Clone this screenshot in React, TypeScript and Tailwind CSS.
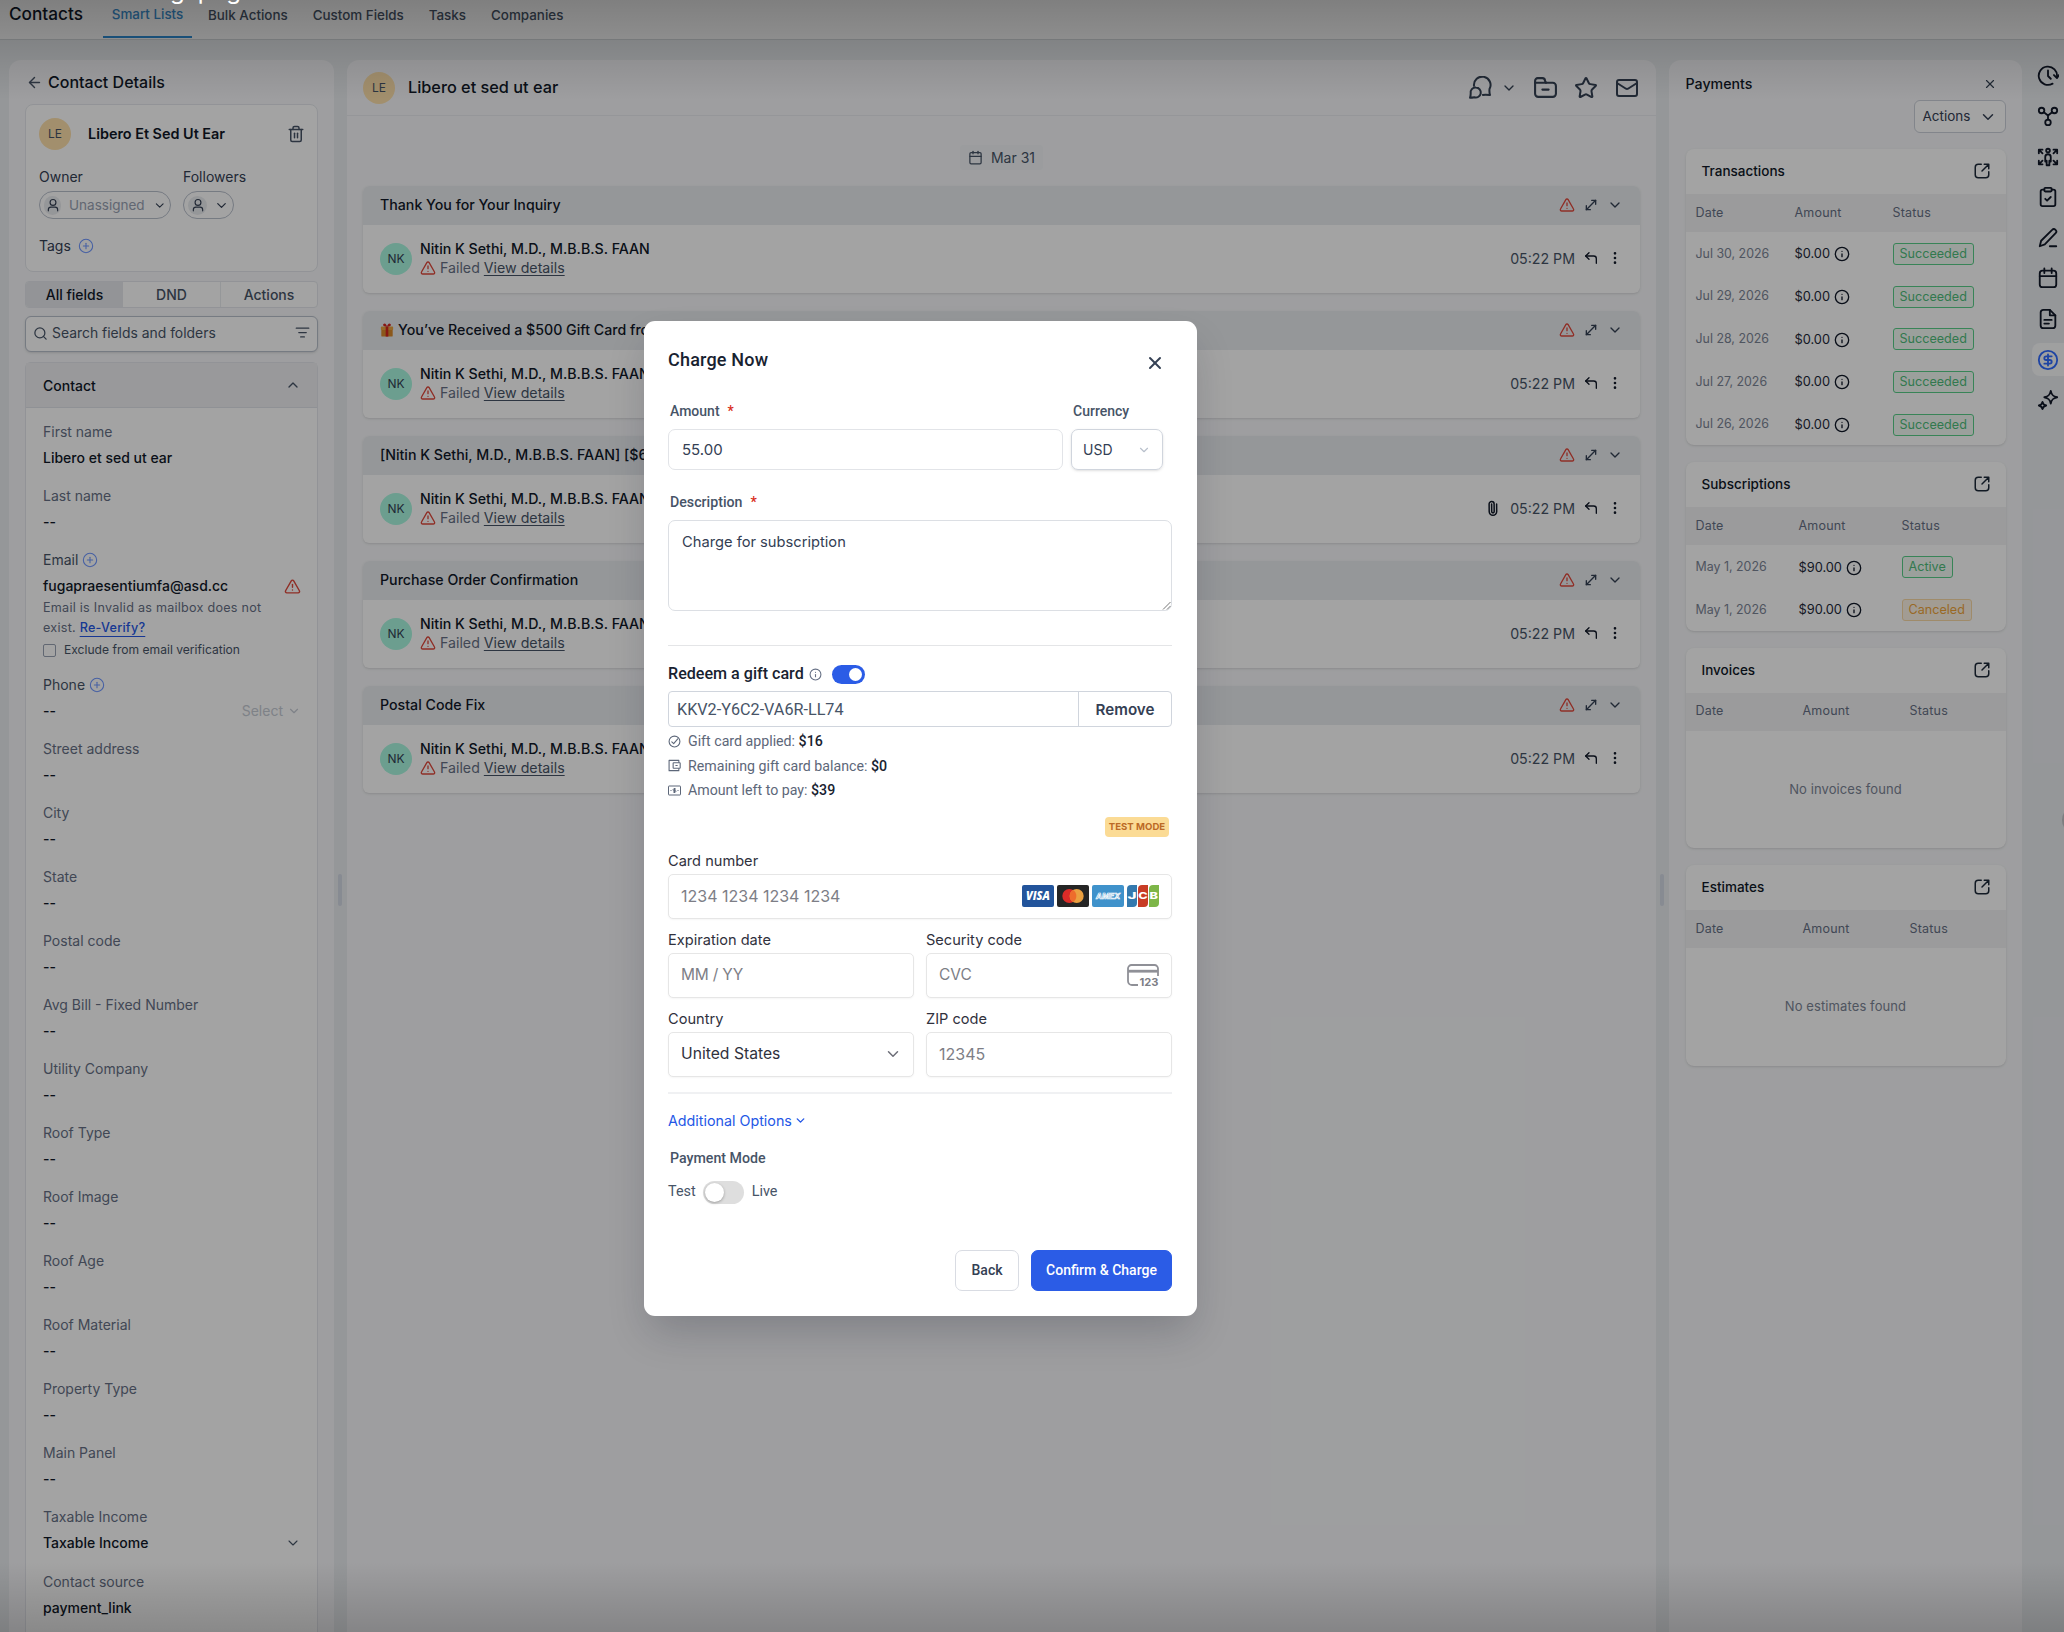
import type { ReactNode } from 'react'
import {
  ArrowLeft,
  Calendar,
  ChevronDown,
  ChevronUp,
  CircleDollarSign,
  CirclePlus,
  ClipboardCheck,
  CornerUpLeft,
  EllipsisVertical,
  FileText,
  Info,
  ListFilter,
  Mail,
  MoveDiagonal,
  Paperclip,
  Search,
  Star,
  Trash2,
  TriangleAlert,
  X,
} from 'lucide-react'

const fields = [
  'Street address',
  'City',
  'State',
  'Postal code',
  'Avg Bill - Fixed Number',
  'Utility Company',
  'Roof Type',
  'Roof Image',
  'Roof Age',
  'Roof Material',
  'Property Type',
  'Main Panel',
]

const messages = [
  { title: 'Thank You for Your Inquiry' },
  { title: 'You’ve Received a $500 Gift Card from', gift: true },
  { title: '[Nitin K Sethi, M.D., M.B.B.S. FAAN] [$6', attachment: true },
  { title: 'Purchase Order Confirmation' },
  { title: 'Postal Code Fix' },
]

const transactions = ['Jul 30, 2026', 'Jul 29, 2026', 'Jul 28, 2026', 'Jul 27, 2026', 'Jul 26, 2026']

/* ---------- Icons ---------- */

function Svg({ children, className }: { children: ReactNode; className?: string }) {
  return (
    <svg
      viewBox="0 0 24 24"
      fill="none"
      stroke="currentColor"
      strokeWidth="2"
      strokeLinecap="round"
      strokeLinejoin="round"
      className={className}
      aria-hidden="true"
    >
      {children}
    </svg>
  )
}

function PersonIcon() {
  return (
    <span className="flex size-[19px] items-center justify-center rounded-full bg-[#eaecf0]">
      <Svg className="size-[14px] text-[#344054]">
        <circle cx="12" cy="7.500" r="5" />
        <path d="M4 22v-2a4.500 4.500 0 0 1 4.500-4.500h7A4.500 4.500 0 0 1 20 20v2" />
      </Svg>
    </span>
  )
}

function ChatIcon() {
  return (
    <Svg className="size-6">
      <path d="M6 9.800A8.300 8.300 0 1 1 21.500 13c-.2 1.900 0 4.300.5 6-2.400-.3-4.600-.6-7.200-.1" />
      <path d="M8 11.500a5 5 0 1 1-1.600 9.800c-1.500.3-2.900.5-4.400.5.500-1.600.7-2.900.7-4.300A5 5 0 0 1 8 11.500z" />
    </Svg>
  )
}

function FolderIcon() {
  return (
    <Svg className="size-[25px]">
      <path d="M2 8V5.500A2.500 2.500 0 0 1 4.500 3H9a2.500 2.500 0 0 1 2.500 2.500L12.500 7.500" />
      <path d="M2 7.500h17a3 3 0 0 1 3 3V18a3 3 0 0 1-3 3H5a3 3 0 0 1-3-3z" />
      <path d="M9 14h6" />
    </Svg>
  )
}

function OpenIcon() {
  return (
    <Svg className="size-[18px] text-[#1d2939]">
      <path d="M11 3H7a4 4 0 0 0-4 4v10a4 4 0 0 0 4 4h10a4 4 0 0 0 4-4v-4" />
      <path d="M15 3h6v6M12 12l9-9" />
    </Svg>
  )
}

const railIcons = [
  <Svg key="clock" className="size-[22px]">
    <path d="M17 20.300A10 10 0 1 1 21.800 13" />
    <path d="M12 6v6l3 3M18.500 11l3.300 3.200L24 11" />
  </Svg>,
  <Svg key="nodes" className="size-[22px]">
    <circle cx="5" cy="6" r="3" />
    <circle cx="19" cy="6" r="3" />
    <circle cx="12" cy="19" r="3" />
    <path d="M7.500 8 12 11.500 16.500 8M12 11.500V16" />
  </Svg>,
  <Svg key="person" className="size-[22px]">
    <circle cx="12" cy="5" r="2" />
    <path d="M9 17v-5a3 3 0 0 1 6 0v5M10.500 21v-5M13.500 21v-5M10.500 21h3" />
    <path d="M2 8V4h4M2 4l4 4M22 8V4h-4M22 4l-4 4M2 16v4h4M2 20l4-4M22 16v4h-4M22 20l-4-4" />
  </Svg>,
  <ClipboardCheck key="tasks" className="size-[22px]" />,
  <Svg key="pen" className="size-[22px]">
    <path d="M3 21l1.500-6L16.500 3.200a2.500 2.500 0 0 1 3.800 3.600L8.500 19zM14 21h7" />
  </Svg>,
  <Svg key="calendar" className="size-[22px]">
    <rect x="3" y="4" width="18" height="18" rx="3" />
    <path d="M3 10h18M8 1.500v5M16 1.500v5" />
  </Svg>,
  <Svg key="docs" className="size-[22px]">
    <path d="M14 2H7a3 3 0 0 0-3 3v14a3 3 0 0 0 3 3h10a3 3 0 0 0 3-3V8z" />
    <path d="M14 2v6h6M8 13h8M8 17h5" />
  </Svg>,
  <CircleDollarSign key="payments" className="size-[22px] text-[#2f6bff]" />,
  <Svg key="ai" className="size-[22px]">
    <path d="M15 2c.9 4.500 2.500 6.100 7 7-4.500.9-6.100 2.500-7 7-.9-4.500-2.500-6.100-7-7 4.500-.9 6.100-2.500 7-7z" />
    <path d="M6 14c.5 2.500 1.500 3.500 4 4-2.500.5-3.500 1.500-4 4-.5-2.500-1.500-3.500-4-4 2.500-.5 3.500-1.500 4-4z" />
  </Svg>,
]

/* ---------- Left column ---------- */

function Field({ label, value = '--', children }: { label: ReactNode; value?: string; children?: ReactNode }) {
  return (
    <div className="h-16 text-[14px] leading-[26px]">
      <div className="text-[#667085]">{label}</div>
      <div className="flex items-center justify-between font-medium text-[#101828]">
        <span>{value}</span>
        {children}
      </div>
    </div>
  )
}

function ContactPanel() {
  return (
    <aside className="h-[1600px] w-[325px] shrink-0 rounded-t-xl bg-[#f7f8fa] px-4">
      <div className="flex h-11 items-center gap-[5px] pl-px text-[16px] font-medium text-[#101828]">
        <ArrowLeft className="size-[17px] text-[#475467]" />
        Contact Details
      </div>

      <div className="h-[168px] rounded-lg border border-[#e4e7ec] bg-white pt-[13px] pr-[10px] pl-[13px]">
        <div className="flex items-center">
          <span className="flex size-8 items-center justify-center rounded-full bg-[#fde0ab] text-[12px] text-[#475467]">LE</span>
          <span className="ml-[17px] text-[14.400px] font-semibold text-[#101828]">Libero Et Sed Ut Ear</span>
          <Trash2 className="mr-[2px] ml-auto size-[18px] text-[#475467]" />
        </div>
        <div className="mt-4 flex gap-3 text-[14px] text-[#344054]">
          <div className="w-[132px]">
            <div className="leading-[22px]">Owner</div>
            <div className="mt-[3px] flex h-7 items-center gap-2 rounded-full border border-[#b9c0cc] pr-1 pl-1">
              <PersonIcon />
              <span className="text-[13.500px] text-[#98a2b3]">Unassigned</span>
              <ChevronDown className="ml-auto size-[15px]" />
            </div>
          </div>
          <div>
            <div className="leading-[22px]">Followers</div>
            <div className="mt-[3px] flex h-7 w-[51px] items-center justify-between rounded-full border border-[#b9c0cc] pr-[4px] pl-1">
              <PersonIcon />
              <ChevronDown className="size-[15px]" />
            </div>
          </div>
        </div>
        <div className="mt-4 flex items-center gap-[7px] text-[14px] leading-[22px] text-[#344054]">
          Tags
          <CirclePlus className="size-4 text-[#6f97ff]" strokeWidth={1.6} />
        </div>
      </div>

      <div className="mt-[9px] grid h-[27px] grid-cols-3 overflow-hidden rounded border border-[#e4e7ec] bg-white text-center text-[14px] leading-[25px] font-medium text-[#475467]">
        <span className="bg-[#e6e8ec] text-[#101828]">All fields</span>
        <span>DND</span>
        <span className="border-l border-[#eaecf0]">Actions</span>
      </div>

      <div className="mt-2 flex h-9 items-center gap-1 rounded-md border border-[#b9c0cc] bg-white px-[7px] pb-px text-[13.900px] text-[#475467] shadow-sm">
        <Search className="size-[15px]" />
        Search fields and folders
        <ListFilter className="mb-[3px] ml-auto size-[15px]" />
      </div>

      <div className="mt-[10px] h-[1300px] rounded-t-md border border-[#e4e7ec] bg-white">
        <div className="flex h-[45px] items-center justify-between border-b border-[#e0e3e9] bg-[#eff0f3] pr-4 pl-[17px] text-[14px] font-medium text-[#101828]">
          Contact
          <ChevronUp className="size-4 text-[#475467]" />
        </div>
        <div className="pt-[11px] pr-4 pl-[17px]">
          <Field label="First name" value="Libero et sed ut ear" />
          <Field label="Last name" />
          <div className="h-[125px] text-[14px] leading-[26px]">
            <div className="flex items-center gap-1 text-[#475467]">
              Email <CirclePlus className="size-4 text-[#6f97ff]" strokeWidth={1.6} />
            </div>
            <div className="flex items-center justify-between font-medium text-[#101828]">
              fugapraesentiumfa@asd.cc
              <TriangleAlert className="size-[17px] text-[#e0493c]" />
            </div>
            <p className="-mt-px text-[12.600px] leading-5 tracking-[0.25px] whitespace-nowrap text-[#667085]">
              Email is Invalid as mailbox does not
              <br />
              exist. <span className="font-medium text-[#2457e6] underline underline-offset-4">Re-Verify?</span>
            </p>
            <label className="flex h-6 items-center gap-2 text-[12.100px] whitespace-nowrap text-[#475467]">
              <span className="size-[13px] rounded-[2px] border border-[#98a2b3]" />
              Exclude from email verification
            </label>
          </div>
          <Field
            label={
              <span className="flex items-center gap-1 text-[#475467]">
                Phone <CirclePlus className="size-4 text-[#6f97ff]" strokeWidth={1.6} />
              </span>
            }
          >
            <span className="flex items-center gap-1 font-normal text-[#c6cbd4]">
              Select <ChevronDown className="size-[14px]" />
            </span>
          </Field>
          {fields.map((label) => (
            <Field key={label} label={label} />
          ))}
          <Field label="Taxable Income" value="Taxable Income">
            <ChevronDown className="size-4 text-[#475467]" strokeWidth={1.6} />
          </Field>
          <div className="pt-px">
            <Field label="Contact source" value="payment_link" />
          </div>
        </div>
      </div>
    </aside>
  )
}

/* ---------- Conversation ---------- */

function MessageCard({ title, gift, attachment }: { title: string; gift?: boolean; attachment?: boolean }) {
  return (
    <article className="h-[107px] overflow-hidden rounded-md bg-white shadow-sm">
      <div className="flex h-[39px] items-center bg-[#eaecf0] px-[17px] pb-[2px] text-[14.200px] font-medium text-[#101828]">
        {gift && <GiftIcon />}
        {title}
        <div className="ml-auto flex items-center gap-2 text-[#344054]">
          <TriangleAlert className="size-[16px] text-[#e0493c]" />
          <MoveDiagonal className="size-4" />
          <ChevronDown className="size-4" />
        </div>
      </div>
      <div className="flex h-[68px] items-center px-[17px]">
        <span className="flex size-8 items-center justify-center rounded-full bg-[#a9f8e0] text-[12px] text-[#344054]">NK</span>
        <div className="ml-2 pb-[2px] text-[14.200px] leading-[19px]">
          <div className="font-medium text-[#101828]">Nitin K Sethi, M.D., M.B.B.S. FAAN</div>
          <div className="flex items-center gap-1 text-[#667085]">
            <TriangleAlert className="size-4 text-[#e0493c]" />
            Failed <span className="text-[#475467] underline underline-offset-2">View details</span>
          </div>
        </div>
        <div className="ml-auto flex items-center gap-2 pb-px text-[14.200px] text-[#475467]">
          {attachment && <Paperclip className="mr-[2px] size-[15px] -rotate-45 text-[#101828]" strokeWidth={2.4} />}
          05:22 PM
          <CornerUpLeft className="size-4 text-[#101828]" />
          <EllipsisVertical className="size-4 text-[#101828]" />
        </div>
      </div>
    </article>
  )
}

function GiftIcon() {
  return (
    <svg viewBox="0 0 16 16" className="mr-1 size-[14px]" aria-hidden="true">
      <rect x="1.500" y="6" width="13" height="9.500" rx="1" fill="#d98a2b" />
      <rect x="1" y="4" width="14" height="4" rx="1" fill="#e8a33f" />
      <rect x="6.500" y="4" width="3" height="11.500" fill="#d3261f" />
      <path d="M8 4C5 4 2.500 3 4 1.200S7.500 1.500 8 4c.5-2.500 2.500-4.600 4-2.800S11 4 8 4z" fill="#d3261f" />
    </svg>
  )
}

function Conversation() {
  return (
    <main className="ml-[13px] h-[1600px] w-[1309px] shrink-0 rounded-t-xl bg-[#f7f8fa]">
      <header className="flex h-14 items-center border-b border-[#e9ebef] px-4">
        <span className="flex size-8 items-center justify-center rounded-full bg-[#fde0ab] text-[12px] text-[#475467]">LE</span>
        <h1 className="ml-[13px] text-[16.300px] font-medium text-[#101828]">Libero et sed ut ear</h1>
        <div className="ml-auto flex items-center text-[#344054]">
          <ChatIcon />
          <ChevronDown className="ml-[9px] size-4" />
          <span className="ml-[16px]">
            <FolderIcon />
          </span>
          <Star className="ml-4 size-6" />
          <Mail className="mr-[1px] ml-[17px] size-6" />
        </div>
      </header>
      <div className="flex h-[70px] items-center justify-center pt-[12px]">
        <span className="flex items-center gap-2 rounded bg-[#f2f4f7] px-2 py-[2px] text-[14px] text-[#475467]">
          <Calendar className="size-[15px]" />
          Mar 31
        </span>
      </div>
      <div className="flex flex-col gap-[18px] px-4">
        {messages.map((message) => (
          <MessageCard key={message.title} {...message} />
        ))}
      </div>
    </main>
  )
}

/* ---------- Payments column ---------- */

function Section({ title, columns, children }: { title: string; columns: string; children: ReactNode }) {
  return (
    <section className="overflow-hidden rounded-lg bg-white shadow-sm">
      <div className="flex h-[45px] items-center justify-between pr-[15px] pb-px pl-4 text-[13.500px] font-medium text-[#101828]">
        {title}
        <OpenIcon />
      </div>
      <div className={`grid h-[38px] items-center bg-[#f3f3f4] pl-[10px] text-[12.500px] tracking-[0.2px] text-[#667085] ${columns}`}>
        <span>Date</span>
        <span>Amount</span>
        <span>Status</span>
      </div>
      {children}
    </section>
  )
}

function Row({ columns, date, amount, status }: { columns: string; date: string; amount: string; status: string }) {
  const tone =
    status === 'Canceled' ? 'border-[#f9d9a6] bg-[#fdf4e6] text-[#f0a53a]' : 'border-[#58cf88] bg-[#f3faf5] text-[#4fbe7b]'
  return (
    <div className={`grid h-[42.700px] items-center pt-px pl-[10px] text-[12.800px] ${columns}`}>
      <span className="text-[12.400px] text-[#7c8596]">{date}</span>
      <span className="flex items-center gap-1 text-[#1d2939]">
        {amount}
        <Info className="mt-px size-4 text-[#101828]" />
      </span>
      <span className={`justify-self-start rounded-[3px] border px-[6px] text-[12.600px] leading-5 ${tone}`}>{status}</span>
    </div>
  )
}

function PaymentsPanel() {
  const wide = 'grid-cols-[99px_98px_1fr]'
  const subs = 'grid-cols-[103px_103px_1fr]'
  const empty = 'grid-cols-[107px_107px_1fr]'
  return (
    <aside className="ml-[13px] h-[1600px] w-[353px] shrink-0 rounded-t-xl bg-[#f7f8fa] px-[16.500px]">
      <div className="flex h-10 items-center justify-between pt-2 pr-[9px] text-[14.200px] font-medium text-[#101828]">
        Payments
        <X className="size-[14px] text-[#344054]" />
      </div>
      <button className="ml-auto flex h-[33px] w-[92px] items-center justify-between rounded-md border border-[#ccd1da] bg-white px-2 text-[13.500px] text-[#344054]">
        Actions
        <ChevronDown className="size-[18px]" />
      </button>
      <div className="mt-4 flex flex-col gap-[17px]">
        <Section title="Transactions" columns={wide}>
          {transactions.map((date) => (
            <Row key={date} columns={wide} date={date} amount="$0.00" status="Succeeded" />
          ))}
        </Section>
        <Section title="Subscriptions" columns={subs}>
          <Row columns={subs} date="May 1, 2026" amount="$90.00" status="Active" />
          <Row columns={subs} date="May 1, 2026" amount="$90.00" status="Canceled" />
        </Section>
        <Section title="Invoices" columns={empty}>
          <p className="flex h-[117.500px] items-center justify-center text-[13px] tracking-[0.100px] text-[#7c8596]">No invoices found</p>
        </Section>
        <Section title="Estimates" columns={empty}>
          <p className="flex h-[117.500px] items-center justify-center text-[13px] tracking-[0.100px] text-[#7c8596]">No estimates found</p>
        </Section>
      </div>
    </aside>
  )
}

function Rail() {
  return (
    <nav className="-mt-px ml-[10px] flex w-8 flex-col text-[#101828]">
      {railIcons.map((icon, i) => (
        <span
          key={i}
          className={`mb-[7.600px] flex h-[33px] items-center justify-center rounded-l-lg ${i === 7 ? 'bg-[#f9fafb]' : ''}`}
        >
          {icon}
        </span>
      ))}
    </nav>
  )
}

/* ---------- Charge modal ---------- */

function CardBrands() {
  return (
    <div className="flex gap-[3px]">
      <svg viewBox="0 0 32 22" className="h-[22px] w-8" aria-hidden="true">
        <rect width="32" height="22" rx="2" fill="#22549b" />
        <text x="16" y="15.200" textAnchor="middle" fontSize="11.500" fontWeight="800" fontStyle="italic" fontFamily="Open Sans, sans-serif" fill="#fff" textLength="24" lengthAdjust="spacingAndGlyphs">
          VISA
        </text>
      </svg>
      <svg viewBox="0 0 32 22" className="h-[22px] w-8" aria-hidden="true">
        <rect width="32" height="22" rx="2" fill="#252525" />
        <circle cx="12.300" cy="11" r="7" fill="#dc2b28" />
        <circle cx="19.700" cy="11" r="7" fill="#eba040" />
        <path d="M16 5a7 7 0 0 1 0 12 7 7 0 0 1 0-12z" fill="#ee6c2c" />
      </svg>
      <svg viewBox="0 0 32 22" className="h-[22px] w-8" aria-hidden="true">
        <rect width="32" height="22" rx="2" fill="#3f92cb" />
        <text x="16" y="13.800" textAnchor="middle" fontSize="7.500" fontWeight="700" fontStyle="italic" fontFamily="Inter, sans-serif" fill="#3f92cb" stroke="#fff" strokeWidth="0.700" textLength="24" lengthAdjust="spacingAndGlyphs">
          AMEX
        </text>
      </svg>
      <svg viewBox="0 0 32 22" className="h-[22px] w-8" aria-hidden="true">
        <path d="M4 0h6v18a4 4 0 0 1-4 4H0V4a4 4 0 0 1 4-4z" fill="#3479ae" />
        <path d="M15 0h6v18a4 4 0 0 1-4 4h-6V4a4 4 0 0 1 4-4z" fill="#c83c25" />
        <path d="M26 0h6v18a4 4 0 0 1-4 4h-6V4a4 4 0 0 1 4-4z" fill="#7db648" />
        <g fontSize="9.500" fontWeight="800" fontFamily="Inter, sans-serif" fill="#fff">
          <text x="0.500" y="14.300" textLength="9" lengthAdjust="spacingAndGlyphs">J</text>
          <text x="11.200" y="14.300" textLength="9.500" lengthAdjust="spacingAndGlyphs">C</text>
          <text x="22.600" y="14.300" textLength="8.500" lengthAdjust="spacingAndGlyphs">B</text>
        </g>
      </svg>
    </div>
  )
}

function CvcIcon() {
  return (
    <svg viewBox="0 0 32 25" className="h-[25px] w-8 overflow-visible" fill="none" stroke="#8f9097" strokeWidth="1.800" aria-hidden="true">
      <path d="M11 22H5a4 4 0 0 1-4-4V5.500A3.500 3.500 0 0 1 4.500 2h23A3.500 3.500 0 0 1 31 5.500V13" />
      <path d="M1 8.200h30" strokeWidth="2.800" />
      <text x="12.500" y="22.500" fontSize="10.500" fontWeight="700" fontFamily="Inter, sans-serif" fill="#7d7e86" stroke="none" textLength="19" lengthAdjust="spacingAndGlyphs">
        123
      </text>
    </svg>
  )
}

function StripeField({ label, children }: { label: string; children: ReactNode }) {
  return (
    <div className="h-[79px] flex-1">
      <div className="h-[25px] text-[14.600px] leading-[24px] text-[#30313d]">{label}</div>
      <div className="flex h-[45px] items-center justify-between rounded-[5px] border border-[#e6e6e6] bg-white px-3 text-[16px] text-[#7d7e86] shadow-[0_1px_2px_rgba(0,0,0,0.04)]">
        {children}
      </div>
    </div>
  )
}

function ChargeModal() {
  return (
    <div className="absolute top-[321px] left-[643.500px] h-[994.500px] w-[553px] rounded-[11px] bg-white px-[24.500px] font-[Roboto,sans-serif] shadow-[0_20px_40px_-6px_rgba(16,24,40,0.22)]">
      <div className="flex h-[78px] items-start justify-between pt-[29px]">
        <h2 className="text-[18px] leading-5 font-medium tracking-[0.2px] text-[#182230]">Charge Now</h2>
        <X className="mt-[3px] mr-[7px] size-5 text-[#344054]" strokeWidth={2.4} />
      </div>

      <div className="flex gap-[8px]">
        <div className="w-[395px]">
          <div className="flex h-[30px] gap-[8px] pl-[2px] text-[14px] leading-[24px] font-medium text-[#475467]">
            Amount <span className="text-[#d92d20]">*</span>
          </div>
          <div className="flex h-[41px] items-center rounded-[7px] border border-[#e2e4e8] px-[13px] pt-px font-[Inter,sans-serif] text-[15px] text-[#344054]">
            55.00
          </div>
        </div>
        <div className="w-[92px]">
          <div className="h-[30px] pl-[2px] text-[14px] leading-[24px] font-medium text-[#475467]">Currency</div>
          <div className="flex h-[41px] items-center justify-between rounded-[7px] border border-[#d0d5dd] px-[11px] font-[Inter,sans-serif] text-[14px] text-[#344054] shadow-sm">
            USD
            <ChevronDown className="size-[14px] text-[#b9c0cc]" />
          </div>
        </div>
      </div>

      <div className="mt-[20px] flex h-[30px] gap-[8px] pl-[2px] text-[14.200px] leading-[25px] font-medium text-[#475467]">
        Description <span className="text-[#d92d20]">*</span>
      </div>
      <div className="flex h-[91px] justify-between rounded-[7px] border border-[#dcdfe4] pt-[10px] pl-[13px] font-[Inter,sans-serif] text-[14.700px] leading-[22px] text-[#344054]">
        Charge for subscription
        <svg viewBox="0 0 9 9" className="size-[9px] self-end" stroke="#777" strokeWidth="1" aria-hidden="true">
          <path d="M1 8.500 8.500 1M5 8.500 8.500 5" />
        </svg>
      </div>

      <div className="mt-[34px] border-t border-[#e4e5e7] pt-[18px]">
        <div className="flex h-5 items-center text-[16.100px] font-medium text-[#182230]">
          Redeem a gift card
          <Info className="ml-[5px] size-[13px] text-[#667085]" />
          <span className="ml-[10px] flex h-[19px] w-[33px] items-center justify-end rounded-full bg-[#2b5ce6] pr-[3px]">
            <span className="size-[13px] rounded-full bg-white" />
          </span>
        </div>
      </div>
      <div className="mt-[7px] flex h-9 rounded border border-[#d0d5dd] text-[16.200px] leading-[35px] text-[#475467]">
        <span className="flex-1 pl-2">KKV2-Y6C2-VA6R-LL74</span>
        <span className="w-[93px] border-l border-[#d0d5dd] text-center font-[Inter,sans-serif] text-[15.200px] font-semibold text-[#344054]">
          Remove
        </span>
      </div>
      <ul className="mt-[2px] text-[14.200px] leading-[24.500px] text-[#5d6779]">
        <li className="flex items-center gap-[7px]">
          <Svg className="size-[13px]">
            <circle cx="12" cy="12" r="10" />
            <path d="m7 12.500 3.500 3.500L18 7" />
          </Svg>
          <span>
            Gift card applied: <b className="font-medium text-[#182230]">$16</b>
          </span>
        </li>
        <li className="flex items-center gap-[7px]">
          <Svg className="size-[13px]">
            <path d="M20 6V2.500H2v19h18V18" />
            <rect x="9.500" y="7" width="13" height="10" rx="1" />
            <path d="M14.500 12h2.500" />
          </Svg>
          <span>
            Remaining gift card balance: <b className="font-medium text-[#182230]">$0</b>
          </span>
        </li>
        <li className="flex items-center gap-[7px]">
          <svg viewBox="0 0 26 22" className="h-[11px] w-[13px]" fill="none" stroke="currentColor" strokeWidth="2" aria-hidden="true">
            <rect x="1" y="2" width="24" height="18" rx="1" />
            <path d="M16 8h-4.500a1.500 1.500 0 0 0 0 3h3a1.500 1.500 0 0 1 0 3H10M13 6v10M5 11h2M19 11h2" />
          </svg>
          <span>
            Amount left to pay: <b className="font-medium text-[#182230]">$39</b>
          </span>
        </li>
      </ul>

      <div className="mt-[14px] flex h-5 justify-end pr-[3px]">
        <span className="w-16 rounded bg-[#fbdb95] text-center font-[Inter,sans-serif] text-[9.600px] leading-5 font-bold text-[#bb6a26]">
          TEST MODE
        </span>
      </div>

      <div className="mt-3 font-[Inter,sans-serif]">
        <StripeField label="Card number">
          1234 1234 1234 1234
          <CardBrands />
        </StripeField>
        <div className="flex gap-3">
          <StripeField label="Expiration date">
            <span className="text-[15.500px] tracking-[-0.2px]">MM / YY</span>
          </StripeField>
          <StripeField label="Security code">
            <span className="text-[15.500px]">CVC</span>
            <CvcIcon />
          </StripeField>
        </div>
        <div className="flex gap-3">
          <StripeField label="Country">
            <span className="text-[15.700px] text-[#30313d]">United States</span>
            <ChevronDown className="-mr-px size-[18px] text-[#6d6e78]" />
          </StripeField>
          <StripeField label="ZIP code">12345</StripeField>
        </div>
      </div>

      <div className="mt-[6px] border-t-2 border-[#f0f1f3]" />
      <div className="mt-[15px] flex h-6 items-center gap-[2px] font-[Inter,sans-serif] text-[14.300px] text-[#2457e6]">
        Additional Options
        <ChevronDown className="size-[13px]" strokeWidth={2.6} />
      </div>
      <div className="mt-[13px] pl-[2px] text-[14.200px] leading-6 font-medium text-[#475467]">Payment Mode</div>
      <div className="mt-[11px] flex h-[23px] items-center gap-[7.500px] text-[14.400px] text-[#475467]">
        Test
        <span className="flex h-[23px] w-[41px] items-center rounded-full bg-[#dedede] pl-[2px]">
          <span className="size-[19px] rounded-full bg-white shadow-[0_1px_3px_rgba(0,0,0,0.3)]" />
        </span>
        Live
      </div>

      <div className="mt-[46px] flex justify-end gap-3 text-[14px] leading-[39px] font-medium">
        <button className="w-16 rounded-[7px] border border-[#d9dce3] text-[#344054]">Back</button>
        <button className="w-[141px] rounded-[7px] border border-[#2b5ce6] bg-[#2b5ce6] text-white">Confirm &amp; Charge</button>
      </div>
    </div>
  )
}

export default function App() {
  return (
    <div className="relative h-[1632px] w-[2064px] overflow-hidden bg-[#eaecf0] font-[Inter,sans-serif]">
      <header className="flex h-10 items-start border-b border-[#d5dadd] bg-white pl-[9px] text-[13.400px] font-medium text-[#475467]">
        <span className="w-[94px] text-[17.200px] leading-7 text-[#101828]">Contacts</span>
        <nav className="flex gap-[25px] leading-[31px]">
          <span className="-mr-[9px] h-[38px] w-[89px] border-b-2 border-[#2e90d9] text-center leading-[29px] text-[#3a8fd0]">
            Smart Lists
          </span>
          <span>Bulk Actions</span>
          <span>Custom Fields</span>
          <span>Tasks</span>
          <span>Companies</span>
        </nav>
      </header>

      <div className="flex pt-5 pl-[9px]">
        <ContactPanel />
        <Conversation />
        <PaymentsPanel />
        <Rail />
      </div>

      {/* Column drag handles */}
      <span className="absolute top-[874px] left-[338px] h-8 w-1 rounded bg-[#d3dae4]" />
      <span className="absolute top-[874px] left-[1660px] h-8 w-1 rounded bg-[#d3dae4]" />

      {/* Backdrop */}
      <div className="absolute inset-0 bg-black/36" />
      <div className="absolute inset-x-0 top-0 h-[100px] bg-linear-to-b from-black/22 to-transparent" />
      <div className="absolute inset-x-0 bottom-0 h-[70px] bg-linear-to-b from-transparent to-black/16" />
      <span className="absolute top-[806px] left-[2062px] h-7 w-7 rounded-full bg-[#7d7d80]" />

      {/* Caption sliding off the top edge */}
      <div className="absolute -top-[22px] left-[170px] flex gap-[13px] text-[24px] leading-[26px] text-white">
        <span>g</span>
        <span>page</span>
      </div>

      <ChargeModal />
    </div>
  )
}
